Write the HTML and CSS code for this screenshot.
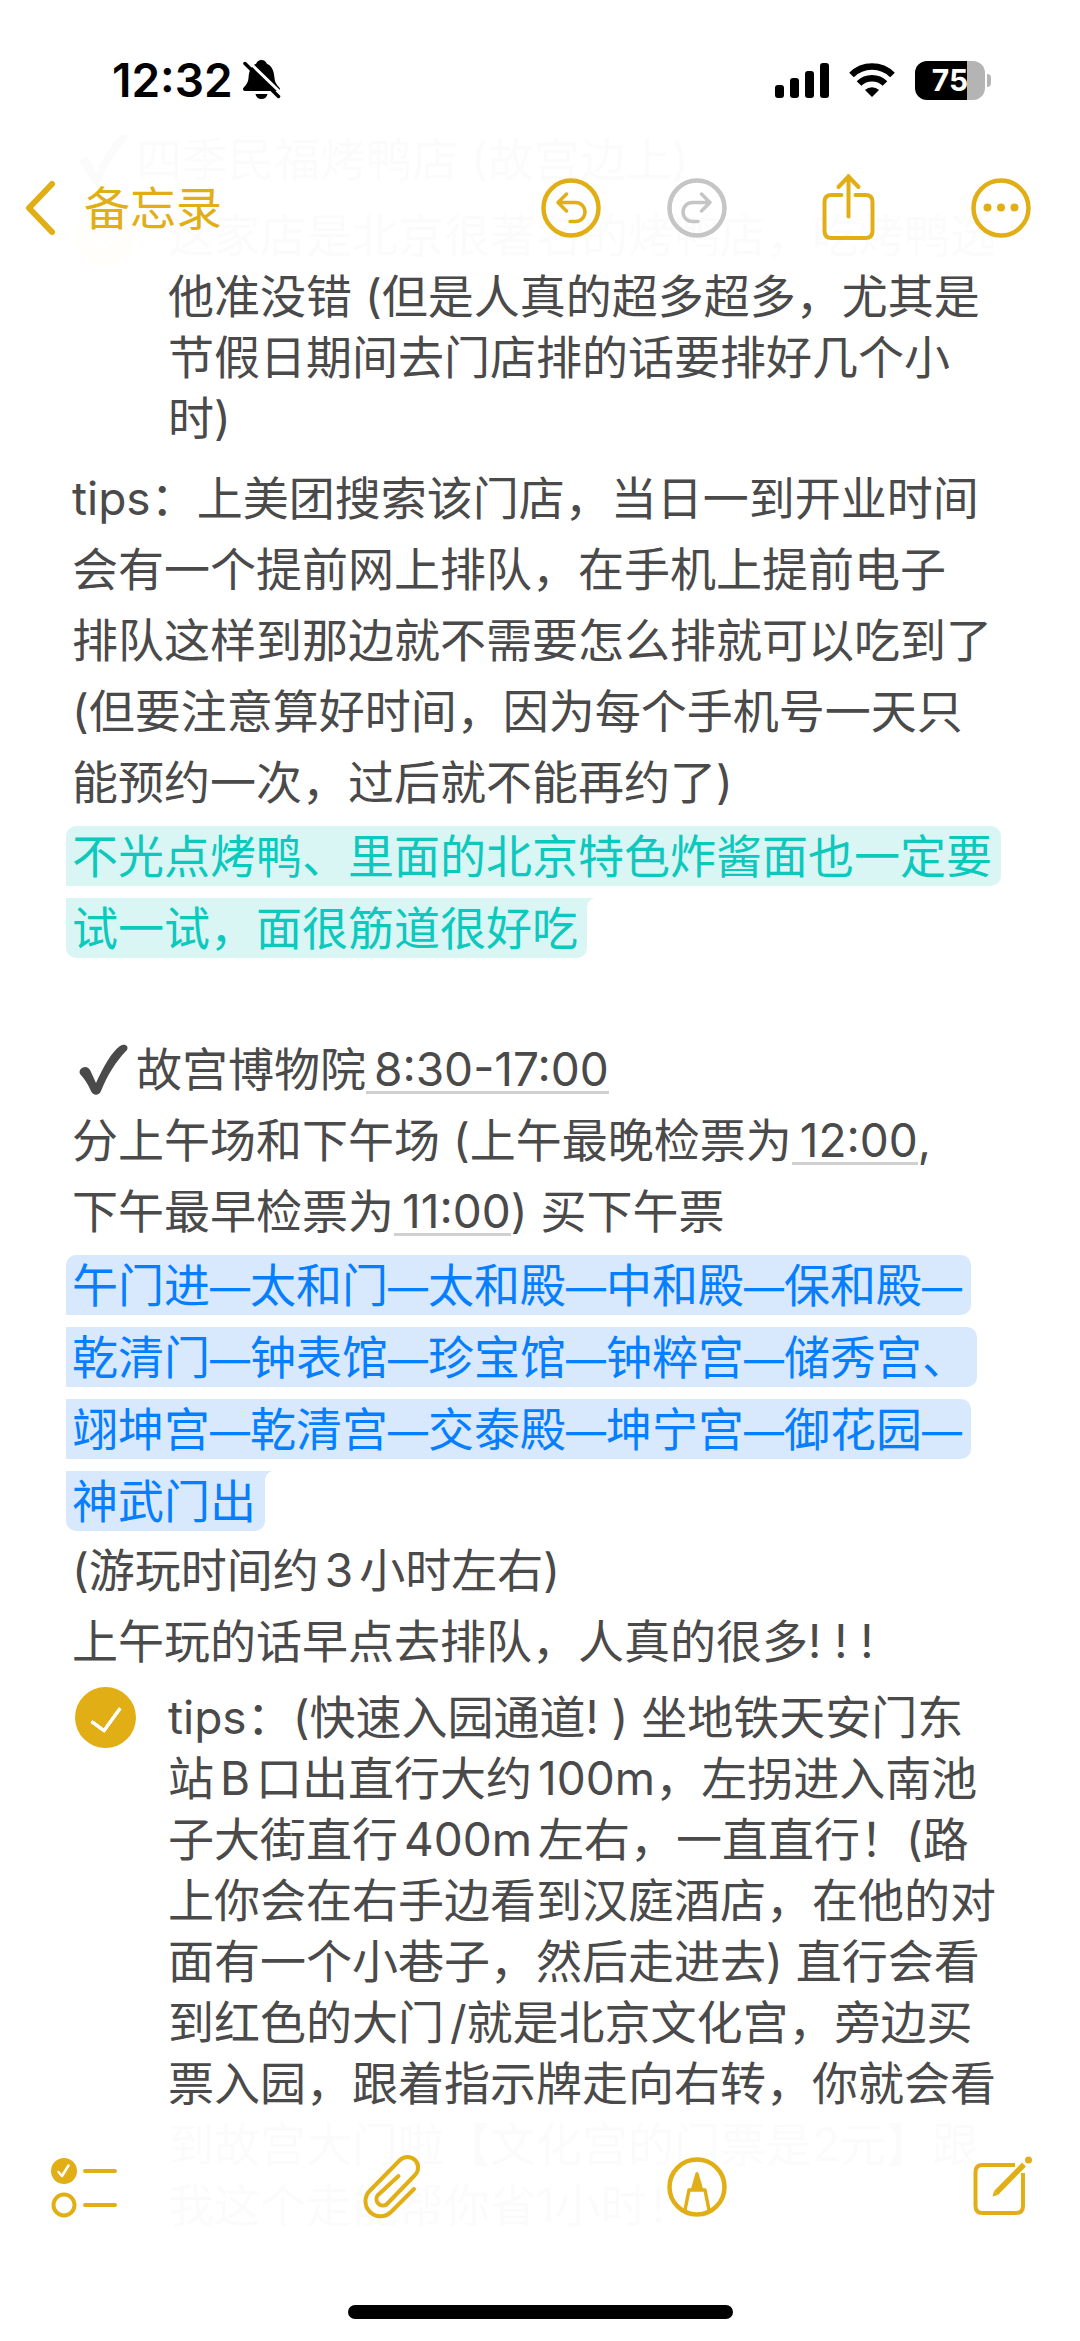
FILE: index.html
```html
<!DOCTYPE html>
<html lang="zh-CN">
<head>
<meta charset="utf-8">
<meta name="viewport" content="width=device-width, initial-scale=1">
<title>备忘录</title>
<link rel="stylesheet" href="styles.css">
</head>
<body>
<div class="screen">
  <header class="top">
    <div class="status">
      <div class="status-left">
        <span class="clock">12:32</span>
        <svg class="bell" width="38" height="40" viewBox="0 0 38 40" aria-hidden="true">
          <path d="M9 31H3q-3 0-3-2c0-2 5-4 5.500-11C6 10 9 5 13 4 14 1.500 16 0 18.500 0s4.500 1.500 5.500 4C28 5 31 10 31.500 18c.5 7 5.500 9 5.500 11q0 2-3 2z" fill="#000"/>
          <path d="M12.500 34h12q-1 5-6 5t-6-5z" fill="#000"/>
          <path d="M4 0 39 34" stroke="#fff" stroke-width="3"/>
          <path d="M2 3.500 35.500 36.500" stroke="#000" stroke-width="3.500" stroke-linecap="round"/>
        </svg>
      </div>
      <div class="status-right">
        <svg width="54" height="35" viewBox="0 0 54 35" aria-hidden="true">
          <rect x="0" y="22" width="9" height="13" rx="3"/>
          <rect x="15" y="15" width="9" height="20" rx="3"/>
          <rect x="30" y="8" width="9" height="27" rx="3"/>
          <rect x="45" y="0" width="9" height="35" rx="3"/>
        </svg>
        <svg width="46" height="34" viewBox="0 0 46 34" fill="none" stroke="#000" stroke-width="6.500" aria-hidden="true">
          <path d="M2.500 12a29 29 0 0 1 41 0"/>
          <path d="M10 20.500a18.500 18.500 0 0 1 26 0"/>
          <path d="M23 34l-7-7a10 10 0 0 1 14 0z" fill="#000" stroke="none"/>
        </svg>
        <div class="battery"><span>75</span></div>
      </div>
    </div>
    <nav class="navbar">
      <a class="back" href="#">
        <svg width="32" height="56" viewBox="0 0 32 56" aria-hidden="true"><path d="M28 4 5 28l23 24" fill="none" stroke="currentColor" stroke-width="6" stroke-linecap="round" stroke-linejoin="round"/></svg>
        <span>备忘录</span>
      </a>
      <div class="actions">
        <div class="history">
          <button type="button" class="icon" aria-label="撤销">
            <svg width="60" height="60" viewBox="0 0 60 60"><circle cx="30" cy="30" r="27.500" stroke-width="4.500"/><path d="M17.500 24.500H34.500a9.500 9.500 0 0 1 0 19H29M25.500 16 17 24.500l8.500 8.500"/></svg>
          </button>
          <button type="button" class="icon muted" aria-label="重做">
            <svg width="60" height="60" viewBox="0 0 60 60"><circle cx="30" cy="30" r="27.500" stroke-width="4.500"/><path d="M42.500 24.500H25.500a9.500 9.500 0 0 0 0 19H31M34.500 16l8.500 8.500-8.500 8.500"/></svg>
          </button>
        </div>
        <button type="button" class="icon" aria-label="共享">
          <svg width="60" height="70" viewBox="0 0 60 70"><path d="M22.500 22H12.500q-7 0-7 7V58q0 7 7 7H46.500q7 0 7-7V29q0-7-7-7H36.500M29.500 3V43.500M19.500 14 29.500 3.500 39.500 14" stroke-width="4"/></svg>
        </button>
        <button type="button" class="icon" aria-label="更多">
          <svg width="60" height="60" viewBox="0 0 60 60"><circle cx="30" cy="30" r="27.500" stroke-width="4.500"/><g fill="currentColor" stroke="none"><circle cx="16.500" cy="29.500" r="4"/><circle cx="30" cy="29.500" r="4"/><circle cx="43.500" cy="29.500" r="4"/></g></svg>
        </button>
      </div>
    </nav>
  </header>

  <main class="note">
    <p class="heading"><svg class="tick" width="54" height="54" viewBox="0 0 54 54" aria-hidden="true"><path d="M4 27c4-5 9-3 11 2l5 11C28 22 36 9 44 3c5-3 9 0 7 4C40 18 31 33 25 48c-2 5-8 5-10 0Q10 37 4 31q-1-2 0-4z" fill="currentColor"/></svg><span>四季民福烤鸭店 (故宫边上)</span></p>
    <label class="item">
      <input type="checkbox" checked>
      <span>这家店是北京很著名的烤鸭店，吃烤鸭选<br>他准没错 (但是人真的超多超多，尤其是<br>节假日期间去门店排的话要排好几个小<br>时)</span>
    </label>
    <p>tips：上美团搜索该门店，当日一到开业时间<br>会有一个提前网上排队，在手机上提前电子<br>排队这样到那边就不需要怎么排就可以吃到了<br>(但要注意算好时间，因为每个手机号一天只<br>能预约一次，过后就不能再约了)</p>
    <p class="hl teal"><mark>不光点烤鸭、里面的北京特色炸酱面也一定要</mark><mark class="tail">试一试，面很筋道很好吃</mark></p>
    <p class="blank"></p>
    <p class="heading"><svg class="tick" width="54" height="54" viewBox="0 0 54 54" aria-hidden="true"><path d="M4 27c4-5 9-3 11 2l5 11C28 22 36 9 44 3c5-3 9 0 7 4C40 18 31 33 25 48c-2 5-8 5-10 0Q10 37 4 31q-1-2 0-4z" fill="currentColor"/></svg><span>故宫博物院<a class="time" href="#">8:30-17:00</a></span></p>
    <p>分上午场和下午场 (上午最晚检票为<a class="time" href="#">12:00</a>,<br>下午最早检票为<a class="time" href="#">11:00</a>) 买下午票</p>
    <p class="hl blue"><mark>午门进<i>—</i>太和门<i>—</i>太和殿<i>—</i>中和殿<i>—</i>保和殿<i>—</i></mark><mark>乾清门<i>—</i>钟表馆<i>—</i>珍宝馆<i>—</i>钟粹宫<i>—</i>储秀宫、</mark><mark>翊坤宫<i>—</i>乾清宫<i>—</i>交泰殿<i>—</i>坤宁宫<i>—</i>御花园<i>—</i></mark><mark class="tail">神武门出</mark></p>
    <p>(游玩时间约<span class="latin">3</span>小时左右)<br>上午玩的话早点去排队，人真的很多! ! !</p>
    <label class="item">
      <input type="checkbox" checked>
      <span>tips：(快速入园通道! ) 坐地铁天安门东<br>站<span class="latin">B</span>口出直行大约<span class="latin start">100m</span>，左拐进入南池<br>子大街直行<span class="latin">400m</span>左右，一直直行！(路<br>上你会在右手边看到汉庭酒店，在他的对<br>面有一个小巷子，然后走进去) 直行会看<br>到红色的大门<span class="latin start">/</span>就是北京文化宫，旁边买<br>票入园，跟着指示牌走向右转，你就会看<br>到故宫大门啦【文化宫的门票是2元】跟<br>我这个走能帮你省1小时！</span>
    </label>
    <div class="attachment"></div>
  </main>

  <footer class="bottom">
    <div class="toolbar">
      <button type="button" class="icon" aria-label="核对清单">
        <svg width="68" height="64" viewBox="0 0 68 64"><circle cx="15" cy="16" r="13" fill="currentColor" stroke="none"/><path d="M9.500 17l3.500 4 6.500-10.500" stroke="#fff" stroke-width="2.500"/><circle cx="15" cy="50" r="10.500" stroke-width="4"/><path d="M36 16H66M36 50H66" stroke-width="4"/></svg>
      </button>
      <button type="button" class="icon" aria-label="附件">
        <svg width="64" height="68" viewBox="0 0 64 68"><path d="M54 36 31 59A15 15 0 0 1 10 37.500L40 7A10.500 10.500 0 0 1 55 22L26.500 51.500A6.500 6.500 0 0 1 17.500 42.500L38.500 23" stroke-width="4"/></svg>
      </button>
      <button type="button" class="icon" aria-label="标记">
        <svg width="60" height="60" viewBox="0 0 60 60"><circle cx="30" cy="30" r="27.500" stroke-width="4.500"/><path d="M18 53 22 33H38L42 53" stroke-width="3.500"/><path d="M23.500 33.500 28.500 16q1.500-2 3 0L36.500 33.500z" fill="currentColor" stroke="none"/></svg>
      </button>
      <button type="button" class="icon" aria-label="新建备忘录">
        <svg width="64" height="64" viewBox="0 0 64 64"><path d="M45 10H12.500q-7 0-7 7V51q0 7 7 7H46q7 0 7-7V18" stroke-width="4" stroke-linecap="butt"/><path d="M26 38 54 9.500" stroke-width="5.500" stroke-linecap="butt"/><path d="M22.500 41.500 24 36l4 4z" fill="currentColor" stroke="none"/><circle cx="58.500" cy="5" r="3.500" fill="currentColor" stroke="none"/></svg>
      </button>
    </div>
    <div class="home"></div>
  </footer>
</div>
</body>
</html>
```
FILE: styles.css
```css
:root {
  --gold: #e1af15;
  --ink: #4a4a4a;
}

* {
  box-sizing: border-box;
}

body {
  margin: 0;
  background: #fff;
  color: var(--ink);
  font-family: Inter, "Noto Sans CJK SC", sans-serif;
  font-size: 46px;
}

.screen {
  position: relative;
  height: 100vh;
  overflow: hidden;
}

/* Translucent bars that float over the scrolled note */
.top,
.bottom {
  position: absolute;
  left: 0;
  right: 0;
  z-index: 1;
  background: rgba(255, 255, 255, 0.98);
}

.top {
  top: 0;
  height: 266px;
}

.bottom {
  bottom: 0;
  height: 226px;
}

.status {
  display: flex;
  justify-content: space-between;
  align-items: center;
  height: 160px;
  padding: 0 95px 0 112px;
  color: #000;
}

.status-left {
  display: flex;
  align-items: center;
  gap: 10px;
}

.clock {
  font-weight: 600;
}

.status-right {
  display: flex;
  align-items: center;
  gap: 20px;
}

.battery {
  position: relative;
  width: 70px;
  height: 39px;
  border-radius: 12px;
  background: linear-gradient(to right, #000 52px, #b4b4b4 52px);
  color: #fff;
  font-size: 30px;
  font-weight: 700;
  line-height: 39px;
  text-align: center;
}

.battery::after {
  content: "";
  position: absolute;
  left: 72px;
  top: 13px;
  width: 4px;
  height: 13px;
  border-radius: 0 4px 4px 0;
  background: #b4b4b4;
}

.navbar {
  display: flex;
  justify-content: space-between;
  align-items: center;
  height: 96px;
  padding: 0 49px 0 24px;
}

.back {
  display: flex;
  align-items: center;
  gap: 28px;
  color: var(--gold);
  text-decoration: none;
}

.back span {
  padding-bottom: 6px;
}

.actions {
  display: flex;
  align-items: center;
  gap: 92px;
}

.history {
  display: flex;
  gap: 66px;
}

.icon {
  display: block;
  padding: 0;
  border: 0;
  background: none;
  color: var(--gold);
}

.icon.muted {
  color: #c5c5c5;
}

.icon svg {
  display: block;
  fill: none;
  stroke: currentColor;
  stroke-width: 3.500;
  stroke-linecap: round;
  stroke-linejoin: round;
}

.note {
  padding: 124px 40px 0 72px;
  white-space: nowrap;
}

.note p {
  margin: 0;
  line-height: 71px;
}

.heading {
  display: flex;
  align-items: center;
}

.tick {
  margin: 0 6px 0 4px;
}

.item {
  display: flex;
  gap: 32px;
  padding: 10px 0 14px 3px;
  line-height: 61px;
}

.item input {
  appearance: none;
  display: grid;
  place-items: center;
  flex: none;
  width: 61px;
  height: 61px;
  margin: 0;
  border-radius: 50%;
  background: var(--gold);
}

.item input::before {
  content: "";
  width: 14px;
  height: 26px;
  margin-bottom: 4px;
  border: solid #fff;
  border-width: 0 4px 4px 0;
  border-radius: 2px;
  transform: rotate(36deg);
}

.note .blank {
  height: 72px;
}

.note .hl {
  padding-top: 8px;
}

.hl mark {
  position: relative;
  display: block;
  width: fit-content;
  height: 60px;
  margin: 0 0 12px -6px;
  padding: 0 9px 0 6px;
  border-radius: 0 10px 10px 0;
  line-height: 60px;
}

.hl mark:first-child {
  border-top-left-radius: 10px;
}

.hl .tail {
  margin-bottom: 4px;
  border-radius: 0 0 10px 10px;
}

.hl .tail::after {
  content: "";
  position: absolute;
  left: 100%;
  top: 0;
  width: 8px;
  height: 10px;
  background: radial-gradient(ellipse 8px 10px at 100% 100%, transparent 98%, var(--tint) 100%);
}

/* The dashes between stops are set a size smaller than the names */
.hl i {
  font-size: 40px;
  font-style: normal;
}

.teal {
  --tint: #d9f6f4;
}

.blue {
  --tint: #d9e9fd;
}

.teal mark {
  background: var(--tint);
  color: #0cc8bd;
}

.blue mark {
  background: var(--tint);
  color: #057eff;
}

.time {
  display: inline-block;
  padding-left: 8px;
  border-bottom: 3px solid #d0d0d0;
  color: inherit;
  line-height: 44px;
  text-decoration: none;
}

.latin {
  margin: 0 6px;
}

.latin.start {
  margin-right: 0;
}

.attachment {
  width: 176px;
  height: 176px;
  margin: 18px 0 0 8px;
  background: #efefe0;
}

.toolbar {
  display: flex;
  justify-content: space-between;
  align-items: center;
  height: 134px;
  padding: 10px 46px 0 49px;
}

.home {
  width: 385px;
  height: 14px;
  margin: 56px auto 0;
  border-radius: 7px;
  background: #000;
}
```
